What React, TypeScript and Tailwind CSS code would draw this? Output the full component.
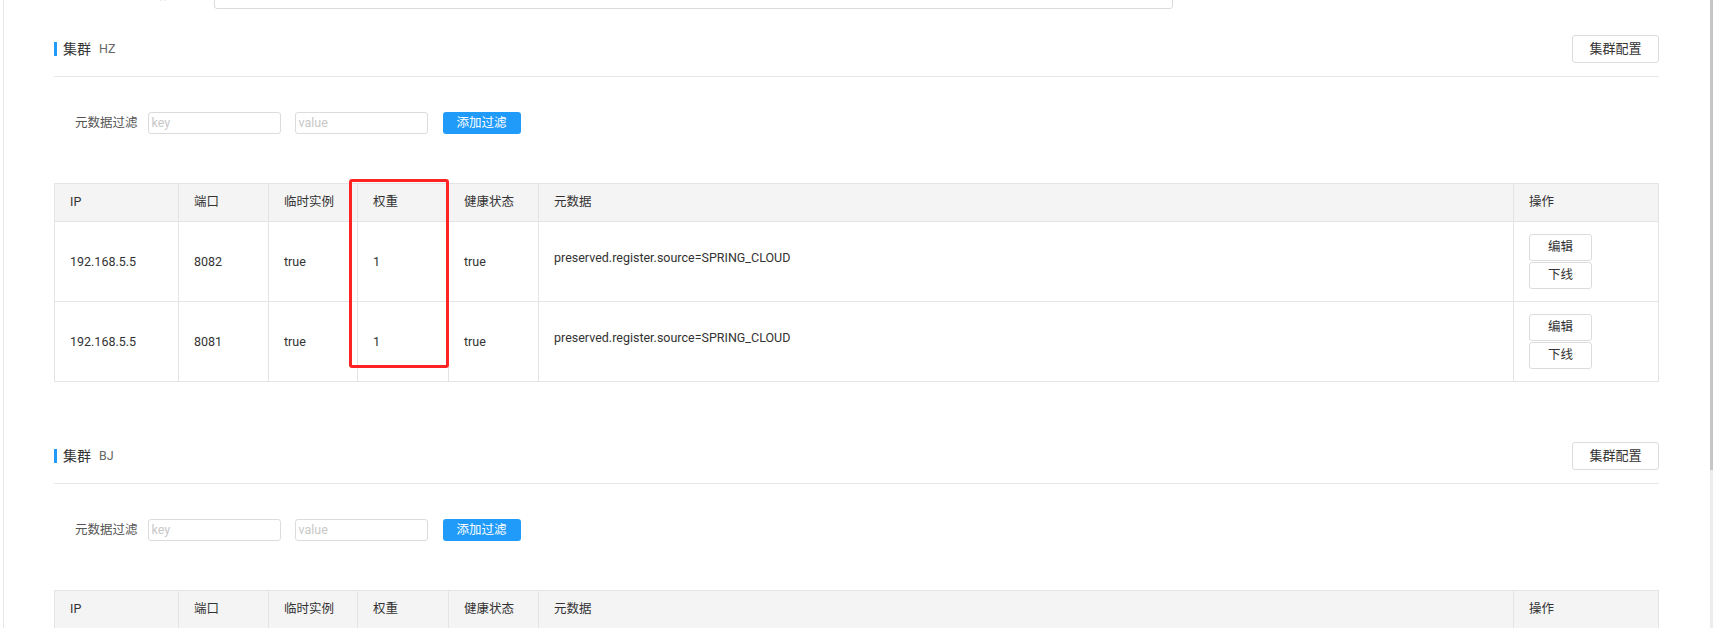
import React from "react";

const FONT = 'Roboto, "Noto Sans CJK SC", "Noto Sans", sans-serif';

type Row = { ip: string; port: string; ephemeral: string; weight: string; healthy: string; meta: string };

const grid = "grid grid-cols-[124px_90px_89px_91px_90px_975px_145px]";

function HeaderCell({ children }: { children?: React.ReactNode }) {
  return (
    <div className="h-[38px] flex items-center pl-[15px] bg-[#f4f4f4] border-r border-b border-[#e4e4e4] text-[#333]">
      {children}
    </div>
  );
}

function Cell({ children, top }: { children?: React.ReactNode; top?: boolean }) {
  return (
    <div
      className={
        "h-[80px] flex items-center pl-[15px] border-r border-b border-[#e4e4e4] text-[#333] " +
        (top ? "pb-[6px]" : "pt-[2px]")
      }
    >
      {children}
    </div>
  );
}

function SmallBtn({ children }: { children: React.ReactNode }) {
  return (
    <button className="w-[63px] h-[27px] border border-[#dcdcdc] rounded-[3px] bg-white text-[#333] text-[12.5px] flex items-center justify-center">
      {children}
    </button>
  );
}

function Cluster({ name, rows, highlight, first }: { name: string; rows: Row[]; highlight?: boolean; first?: boolean }) {
  return (
    <div className={first ? "mt-[26px]" : "mt-[60px]"}>
      <div className="h-[28px] flex items-center justify-between">
        <div className="flex items-center">
          <div className="w-[3px] h-[14px] bg-[#209bfa]" />
          <span className="ml-[6px] text-[14px] text-[#333]">集群</span>
          <span className="ml-[8px] text-[12.5px] text-[#666]">{name}</span>
        </div>
        <button className="w-[87px] h-[28px] border border-[#dcdcdc] rounded-[3px] bg-white text-[13px] text-[#333] flex items-center justify-center">
          集群配置
        </button>
      </div>
      <div className="mt-[13px] border-t border-[#e8e8e8]" />
      <div className="mt-[35px] h-[22px] flex items-center pl-[21px]">
        <span className="text-[12.5px] text-[#555]">元数据过滤</span>
        <div className="ml-[10px] w-[133px] h-[22px] border border-[#dcdcdc] rounded-[3px] flex items-center pl-[3px] text-[12.5px] text-[#c8c8c8]">
          key
        </div>
        <div className="ml-[14px] w-[133px] h-[22px] border border-[#dcdcdc] rounded-[3px] flex items-center pl-[3px] text-[12.5px] text-[#c8c8c8]">
          value
        </div>
        <button className="ml-[15px] w-[78px] h-[22px] rounded-[3px] bg-[#209bfa] text-white text-[12.5px] flex items-center justify-center">
          添加过滤
        </button>
      </div>
      <div className="relative mt-[49px] w-[1605px]">
        <div className={grid + " border-t border-l border-[#e4e4e4] text-[12.5px]"}>
          <HeaderCell>IP</HeaderCell>
          <HeaderCell>端口</HeaderCell>
          <HeaderCell>临时实例</HeaderCell>
          <HeaderCell>权重</HeaderCell>
          <HeaderCell>健康状态</HeaderCell>
          <HeaderCell>元数据</HeaderCell>
          <HeaderCell>操作</HeaderCell>
          {rows.map((r, i) => (
            <React.Fragment key={i}>
              <Cell>{r.ip}</Cell>
              <Cell>{r.port}</Cell>
              <Cell>{r.ephemeral}</Cell>
              <Cell>{r.weight}</Cell>
              <Cell>{r.healthy}</Cell>
              <Cell top>{r.meta}</Cell>
              <div className="h-[80px] flex items-center pl-[15px] border-r border-b border-[#e4e4e4]">
                <div className="flex flex-col gap-[1px]">
                  <SmallBtn>编辑</SmallBtn>
                  <SmallBtn>下线</SmallBtn>
                </div>
              </div>
            </React.Fragment>
          ))}
        </div>
        {highlight && (
          <div className="absolute left-[295px] top-[-4px] w-[100px] h-[189px] border-[3px] border-[#ff2424] rounded-[3px] pointer-events-none" />
        )}
      </div>
    </div>
  );
}

export default function App() {
  const rows: Row[] = [
    { ip: "192.168.5.5", port: "8082", ephemeral: "true", weight: "1", healthy: "true", meta: "preserved.register.source=SPRING_CLOUD" },
    { ip: "192.168.5.5", port: "8081", ephemeral: "true", weight: "1", healthy: "true", meta: "preserved.register.source=SPRING_CLOUD" },
  ];
  return (
    <div className="h-[628px] w-[1714px] overflow-hidden bg-white flex" style={{ fontFamily: FONT }}>
      <div className="w-[3px] shrink-0" />
      <div className="flex-1 border-l border-[#e8e8e8] bg-white">
        <div className="ml-[50px] w-[1605px]">
          <div className="mt-[-19px] h-[28px] flex items-center">
            <div className="w-[150px] text-right text-[12.5px] text-[#555]">服务路由类型</div>
            <div className="ml-[10px] w-[959px] h-[28px] border border-[#dcdcdc] rounded-[3px]" />
          </div>
          <Cluster name="HZ" rows={rows} highlight first />
          <Cluster name="BJ" rows={rows} />
        </div>
      </div>
      <div className="w-[4px] shrink-0 flex flex-col">
        <div className="h-[470px] w-[3px] bg-[#c6c6c6]" />
        <div className="flex-1 w-[3px] bg-[#ececec]" />
      </div>
    </div>
  );
}
